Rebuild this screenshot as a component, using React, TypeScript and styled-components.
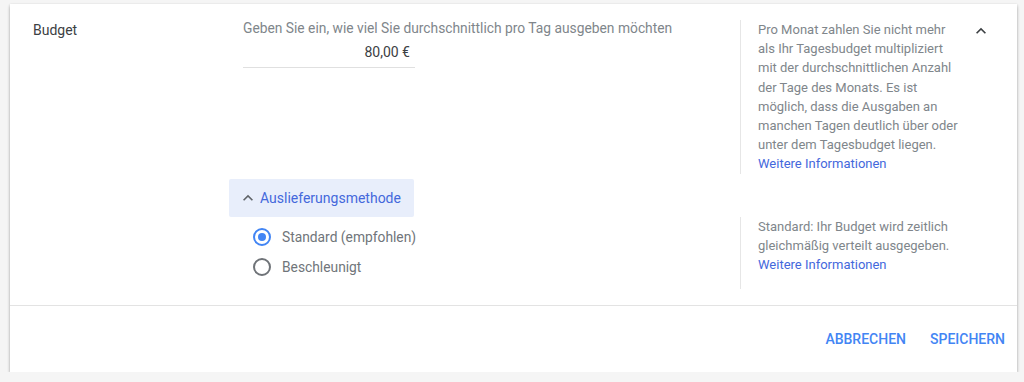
import React from 'react'
import styled, { createGlobalStyle } from 'styled-components'

const GlobalStyle = createGlobalStyle`
  html, body {
    margin: 0;
    padding: 0;
    background: #f5f5f5;
    font-family: Roboto, "Liberation Sans", Arial, sans-serif;
  }
`

const ExpandLess: React.FC<{ color?: string }> = ({ color = '#3c4043' }) => (
  <svg width="20" height="20" viewBox="0 0 24 24" fill={color}>
    <path d="M12 8l-6 6 1.41 1.41L12 10.83l4.59 4.58L18 14z" />
  </svg>
)

const App: React.FC = () => {
  return (
    <>
      <GlobalStyle />
      <StyledCard>
        <StyledBody>
          <StyledLabel>Budget</StyledLabel>
          <StyledField>
            <StyledFieldLabel>Geben Sie ein, wie viel Sie durchschnittlich pro Tag ausgeben möchten</StyledFieldLabel>
            <StyledInput>80,00 €</StyledInput>
          </StyledField>
          <StyledInfo>
            Pro Monat zahlen Sie nicht mehr als Ihr Tagesbudget multipliziert mit der durchschnittlichen Anzahl der Tage
            des Monats. Es ist möglich, dass die Ausgaben an manchen Tagen deutlich über oder unter dem Tagesbudget
            liegen.
            <br />
            <StyledLink href="#">Weitere Informationen</StyledLink>
          </StyledInfo>
          <StyledCollapse>
            <ExpandLess />
          </StyledCollapse>

          <StyledToggleCell>
            <StyledToggle type="button">
              <ExpandLess color="#5f6368" />
              Auslieferungsmethode
            </StyledToggle>
          </StyledToggleCell>

          <StyledRadioGroup>
            <StyledRadioRow>
              <StyledRadio checked />
              Standard (empfohlen)
            </StyledRadioRow>
            <StyledRadioRow>
              <StyledRadio />
              Beschleunigt
            </StyledRadioRow>
          </StyledRadioGroup>
          <StyledInfo>
            Standard: Ihr Budget wird zeitlich gleichmäßig verteilt ausgegeben.
            <br />
            <StyledLink href="#">Weitere Informationen</StyledLink>
          </StyledInfo>
        </StyledBody>
        <StyledFooter>
          <StyledTextButton type="button">ABBRECHEN</StyledTextButton>
          <StyledTextButton type="button">SPEICHERN</StyledTextButton>
        </StyledFooter>
      </StyledCard>
    </>
  )
}

export default App

const StyledCard = styled.div`
  margin: 4px 7px 0 10px;
  background: #fff;
  box-shadow: 0 2px 3px rgba(0, 0, 0, 0.3), 0 0 2px rgba(0, 0, 0, 0.08);
`
const StyledBody = styled.div`
  display: grid;
  grid-template-columns: 210px 497px 222px 38px;
  padding: 16px 17px 16px 23px;
  border-bottom: 1px solid #e3e3e3;
`
const StyledLabel = styled.div`
  font-size: 14px;
  line-height: 20px;
  color: #3c4043;
`
const StyledField = styled.div`
  margin-top: -2px;
`
const StyledFieldLabel = styled.div`
  font-size: 13.8px;
  line-height: 20px;
  color: #80868b;
`
const StyledInput = styled.div`
  width: 172px;
  box-sizing: border-box;
  height: 30px;
  padding-right: 5px;
  text-align: right;
  font-size: 14px;
  line-height: 28px;
  color: #3c4043;
  border-bottom: 1px solid #e0e0e0;
`
const StyledInfo = styled.div`
  border-left: 1px solid #e6e6e6;
  padding-left: 17px;
  width: 200px;
  font-size: 13px;
  line-height: 19.2px;
  color: #80868b;
`
const StyledLink = styled.a`
  color: #4468dc;
  text-decoration: none;
`
const StyledCollapse = styled.div`
  display: flex;
  justify-content: center;
  padding-top: 1px;
`
const StyledToggleCell = styled.div`
  grid-column: 2 / 3;
  margin: 5px 0 0 -14px;
`
const StyledToggle = styled.button`
  display: flex;
  align-items: center;
  gap: 2px;
  height: 38px;
  padding: 0 13px 0 9px;
  border: none;
  border-radius: 2px;
  background: #e8eefb;
  font-family: inherit;
  font-size: 14px;
  color: #4468dc;
  cursor: pointer;
`
const StyledRadioGroup = styled.div`
  grid-column: 2 / 3;
  padding: 5px 0 7px 10px;
`
const StyledRadioRow = styled.label`
  display: flex;
  align-items: center;
  gap: 11px;
  height: 30px;
  font-size: 13.8px;
  color: #70757a;
`
const StyledRadio = styled.span<{ checked?: boolean }>`
  position: relative;
  width: 18px;
  height: 18px;
  box-sizing: border-box;
  border-radius: 50%;
  border: 2px solid ${p => (p.checked ? '#4285f4' : '#6f7378')};
  &::after {
    content: '';
    display: ${p => (p.checked ? 'block' : 'none')};
    position: absolute;
    left: 3px;
    top: 3px;
    width: 8px;
    height: 8px;
    border-radius: 50%;
    background: #4285f4;
  }
`
const StyledFooter = styled.div`
  display: flex;
  justify-content: flex-end;
  align-items: center;
  gap: 8px;
  height: 66px;
  padding: 0 4px;
`
const StyledTextButton = styled.button`
  padding: 8px;
  border: none;
  background: none;
  font-family: inherit;
  font-size: 14px;
  font-weight: 500;
  color: #4285f4;
  cursor: pointer;
`
